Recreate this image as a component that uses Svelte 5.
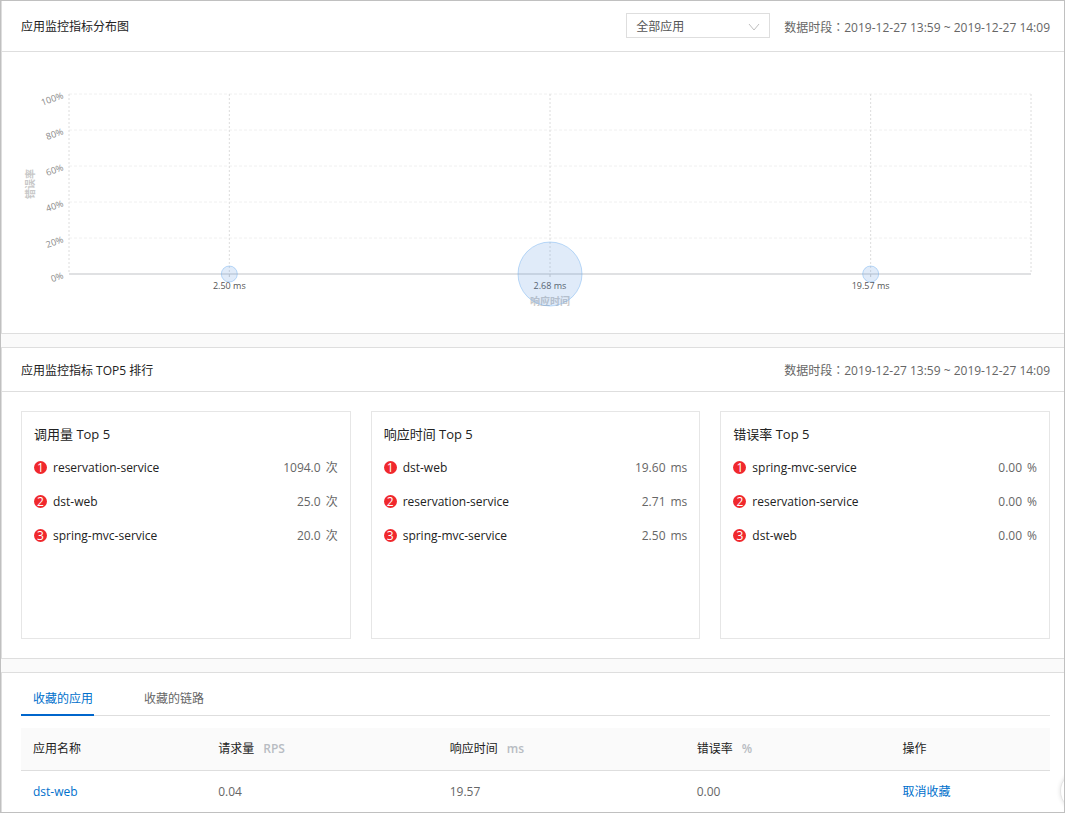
<script lang="ts">
  type Row = { name: string; value: string };
  type Board = { title: string; unit: string; rows: Row[] };

  const period = '2019-12-27 13:59 ~ 2019-12-27 14:09';

  // plot area inside the chart's viewBox
  const plot = { left: 67, top: 42, width: 962, height: 180 };
  const right = plot.left + plot.width;
  const bottom = plot.top + plot.height;

  const ticks = [100, 80, 60, 40, 20, 0];
  const points = [
    { label: '2.50 ms', r: 8 },
    { label: '2.68 ms', r: 32 },
    { label: '19.57 ms', r: 8 },
  ];

  const tickY = (t: number) => bottom - (t / 100) * plot.height;
  const pointX = (i: number) => plot.left + (plot.width * (2 * i + 1)) / (points.length * 2);

  const boards: Board[] = [
    {
      title: '调用量 Top 5',
      unit: '次',
      rows: [
        { name: 'reservation-service', value: '1094.0' },
        { name: 'dst-web', value: '25.0' },
        { name: 'spring-mvc-service', value: '20.0' },
      ],
    },
    {
      title: '响应时间 Top 5',
      unit: 'ms',
      rows: [
        { name: 'dst-web', value: '19.60' },
        { name: 'reservation-service', value: '2.71' },
        { name: 'spring-mvc-service', value: '2.50' },
      ],
    },
    {
      title: '错误率 Top 5',
      unit: '%',
      rows: [
        { name: 'spring-mvc-service', value: '0.00' },
        { name: 'reservation-service', value: '0.00' },
        { name: 'dst-web', value: '0.00' },
      ],
    },
  ];

  const tabs = ['收藏的应用', '收藏的链路'];
  let activeTab = $state(0);
  let app = $state('all');
</script>

{#snippet dataPeriod()}
  <span class="period">数据时段<span class="colon">：</span>{period}</span>
{/snippet}

<div class="page">
  <section class="panel">
    <header class="panel-head tall">
      <h2>应用监控指标分布图</h2>
      <div class="select-wrap">
        <select aria-label="应用" bind:value={app}>
          <option value="all">全部应用</option>
        </select>
        <svg class="chevron" width="12" height="12" viewBox="0 0 12 12" fill="none" stroke="#bfbfbf">
          <path d="M1 3L6 9L11 3" />
        </svg>
      </div>
      {@render dataPeriod()}
    </header>

    <svg class="chart" viewBox="0 0 1062 281" role="img" aria-label="应用监控指标分布图">
      {#each ticks.slice(0, -1) as t}
        <line class="grid-h" x1={plot.left} x2={right} y1={tickY(t)} y2={tickY(t)} />
      {/each}
      <line class="grid-v" x1={plot.left} x2={plot.left} y1={plot.top} y2={bottom} />
      {#each points as _, i}
        <line class="grid-v" x1={pointX(i)} x2={pointX(i)} y1={plot.top} y2={bottom} />
      {/each}
      <line class="grid-v" x1={right} x2={right} y1={plot.top} y2={bottom} />
      <line class="axis" x1={plot.left} x2={right} y1={bottom} y2={bottom} />

      {#each ticks as t}
        <text class="tick" text-anchor="end" transform="translate(62 {tickY(t) + 4}) rotate(-20)">{t}%</text>
      {/each}
      <text class="axis-title" text-anchor="middle" transform="translate(32 132) rotate(-90)">错误率</text>
      <text class="axis-title" text-anchor="middle" x={pointX(1)} y="253">响应时间</text>

      {#each points as p, i}
        <line class="mark" x1={pointX(i)} x2={pointX(i)} y1={bottom} y2={bottom + 3} />
        <text class="label" text-anchor="middle" x={pointX(i)} y="237">{p.label}</text>
        <circle cx={pointX(i)} cy={bottom} r={p.r} />
      {/each}
    </svg>
  </section>

  <section class="panel">
    <header class="panel-head">
      <h2>应用监控指标 TOP5 排行</h2>
      {@render dataPeriod()}
    </header>

    <div class="boards">
      {#each boards as board}
        <div class="board">
          <h3>{board.title}</h3>
          <ol>
            {#each board.rows as row, i}
              <li>
                <span class="rank">{i + 1}</span>
                <span class="name">{row.name}</span>
                <span class="value">{row.value}</span>
                <span class="unit">{board.unit}</span>
              </li>
            {/each}
          </ol>
        </div>
      {/each}
    </div>
  </section>

  <section class="panel last">
    <div class="tabs" role="tablist">
      {#each tabs as tab, i}
        <button role="tab" class:active={activeTab === i} aria-selected={activeTab === i} onclick={() => (activeTab = i)}>{tab}</button>
      {/each}
    </div>

    <table>
      <thead>
        <tr>
          <th class="c1">应用名称</th>
          <th class="c2">请求量<b>RPS</b></th>
          <th class="c3">响应时间<b>ms</b></th>
          <th class="c4">错误率<b>%</b></th>
          <th>操作</th>
        </tr>
      </thead>
      <tbody>
        <tr>
          <td><a href="#dst-web">dst-web</a></td>
          <td>0.04</td>
          <td>19.57</td>
          <td>0.00</td>
          <td><a href="#unfollow">取消收藏</a></td>
        </tr>
      </tbody>
    </table>
  </section>

  <button class="floater" aria-label="帮助"></button>
</div>

<style>
  .page {
    position: relative;
    box-sizing: border-box;
    min-height: 100vh;
    display: flex;
    flex-direction: column;
    gap: 13px;
    overflow: hidden;
    border: 1px solid #c0c0c0;
    background: #fafafa;
    color: #222;
    font: 12px/20px "Open Sans", "Noto Sans CJK SC", sans-serif;
  }
  h2, h3, ol { margin: 0; padding: 0; font-weight: 400; }
  h2 { flex: 1; padding-top: 2px; font-size: 12px; }

  .panel {
    border: 1px solid #dedede;
    border-right: 0;
    background: #fff;
  }
  .panel:first-child { border-top: 0; }
  .panel.last { flex: 1; border-bottom: 0; padding: 0 14px 0 19px; }
  .panel-head {
    display: flex;
    align-items: center;
    gap: 14px;
    height: 43px;
    padding: 0 14px 0 19px;
    border-bottom: 1px solid #dedede;
  }
  .panel-head.tall { height: 50px; }
  .period { padding-top: 2px; color: #666; }
  .colon { font-family: "Noto Sans CJK TC", sans-serif; }

  .select-wrap { position: relative; width: 144px; margin-bottom: 1px; }
  select {
    display: block;
    box-sizing: border-box;
    width: 100%;
    height: 25px;
    padding: 2px 28px 0 9px;
    appearance: none;
    border: 1px solid #dedede;
    border-radius: 0;
    background: #fff;
    color: #555;
    font: inherit;
  }
  .chevron { position: absolute; right: 10px; top: 8px; pointer-events: none; }

  /* chart */
  .chart { display: block; width: 100%; height: auto; }
  .grid-h { stroke: #f0f0f0; stroke-dasharray: 3 2; }
  .grid-v { stroke: #dcdcdc; stroke-dasharray: 2 2; }
  .axis { stroke: #e0e1e3; stroke-width: 2; }
  .mark { stroke: #ccc; }
  .tick { fill: #888; font-size: 9px; }
  .label { fill: #555; font-size: 9px; }
  .axis-title { fill: #c8c8c8; font-size: 10px; font-weight: 700; }
  circle { fill: rgba(100, 155, 225, .2); stroke: rgba(110, 175, 240, .45); }

  /* top 5 */
  .boards {
    display: grid;
    grid-template-columns: repeat(3, 1fr);
    gap: 20px;
    padding: 19px 14px 19px 19px;
  }
  .board {
    box-sizing: border-box;
    min-height: 228px;
    padding: 12px;
    border: 1px solid #e6e6e6;
  }
  h3 { margin-bottom: 7px; font-size: 13px; }
  ol { list-style: none; }
  li { display: flex; align-items: center; height: 34px; }
  .rank {
    width: 13px;
    height: 13px;
    margin: 0 6px 2px 0;
    border-radius: 50%;
    background: #f0282d;
    color: #fff;
    line-height: 13px;
    text-align: center;
  }
  .name { flex: 1; }
  .value, .unit { color: #666; }
  .unit { margin-left: 5px; }

  /* favourites */
  .tabs { display: flex; gap: 38px; border-bottom: 1px solid #dedede; margin-bottom: 12px; }
  .tabs button {
    margin-bottom: -1px;
    padding: 16px 1px 5px 12px;
    border: 0;
    border-bottom: 2px solid transparent;
    background: none;
    color: #666;
    font: inherit;
    cursor: pointer;
  }
  .tabs button.active { border-color: #06c; color: #0070cc; }

  table { width: 100%; table-layout: fixed; border-collapse: collapse; }
  th, td { box-sizing: border-box; padding: 11px 12px; text-align: left; font-weight: 400; }
  th { background: #fafafa; border-bottom: 1px solid #dedede; }
  th b { margin-left: 9px; color: #b8bcc2; font-weight: 600; }
  td { padding-bottom: 8px; color: #666; }
  .c1 { width: 18%; }
  .c2 { width: 22.5%; }
  .c3 { width: 24%; }
  .c4 { width: 20%; }
  a { color: #0070cc; text-decoration: none; }

  .floater {
    position: absolute;
    right: -36px;
    bottom: 1px;
    width: 40px;
    height: 40px;
    padding: 0;
    border: 1px solid #e6e6e6;
    border-radius: 50%;
    background: #fff;
    box-shadow: 0 0 4px rgba(0, 0, 0, .12);
  }
</style>
